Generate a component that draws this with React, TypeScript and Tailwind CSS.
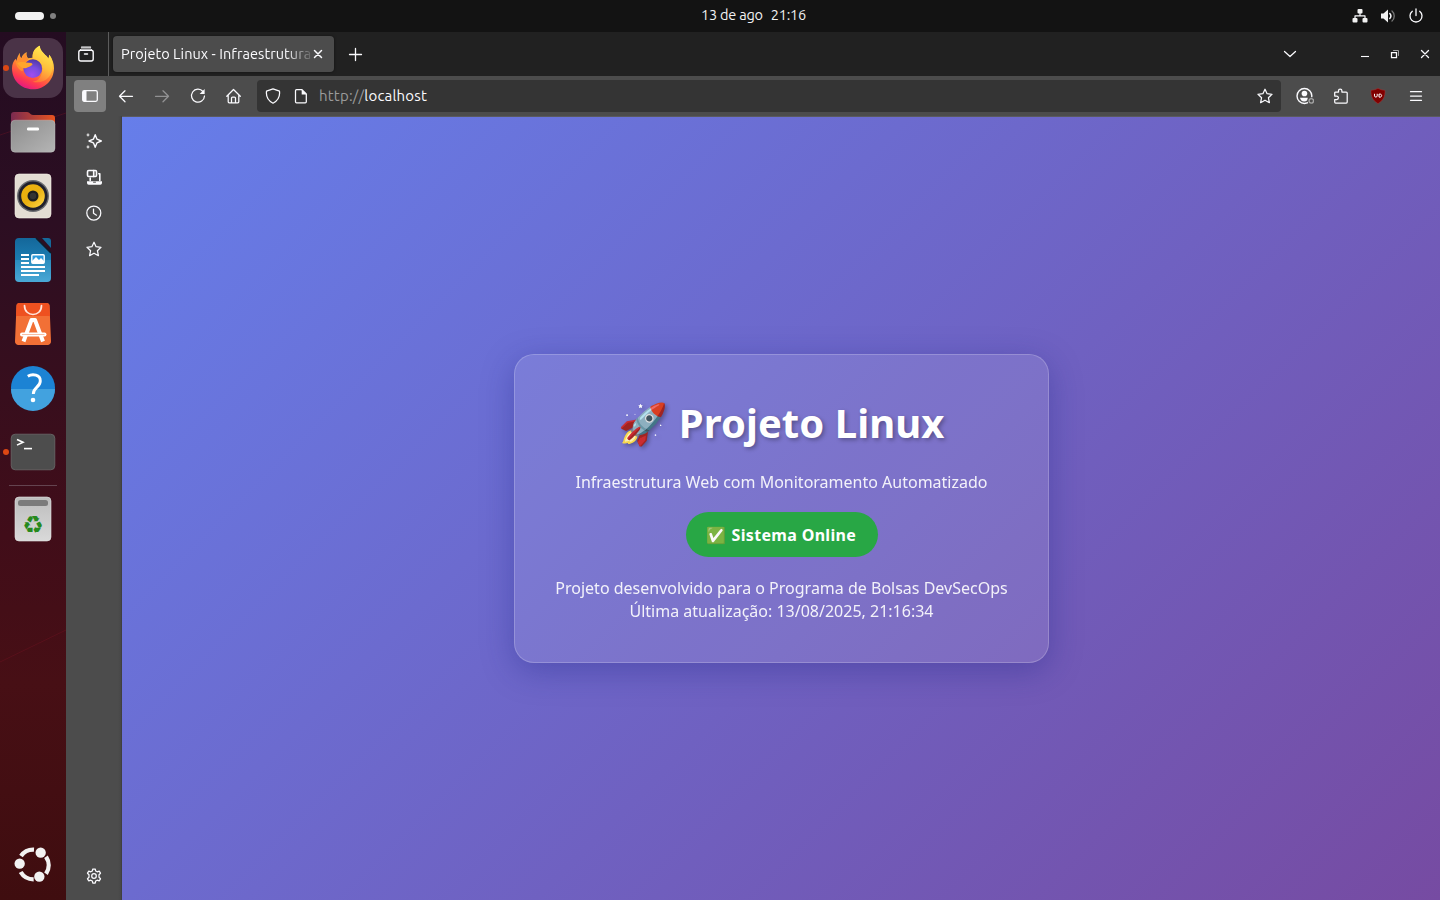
import React from "react";

type Kids = { children: React.ReactNode };

function Glyph({ children, size = 16 }: Kids & { size?: number }) {
  return (
    <svg width={size} height={size} viewBox="0 0 16 16" fill="none" stroke="#fbfbfe" strokeWidth="1.25" strokeLinecap="round" strokeLinejoin="round" className="block shrink-0">
      {children}
    </svg>
  );
}

const STAR = "M8 1.2 10.1 5.7 15 6.3 11.4 9.7 12.4 14.7 8 12.2 3.6 14.7 4.6 9.7 1 6.3 5.9 5.7Z";

function Star() {
  return <Glyph><path d={STAR} /></Glyph>;
}

function ToolButton({ children, active }: Kids & { active?: boolean }) {
  return (
    <div className={active ? "flex size-8 shrink-0 items-center justify-center rounded bg-[#808080]" : "flex size-8 shrink-0 items-center justify-center rounded"}>
      {children}
    </div>
  );
}

function FirefoxIcon() {
  return (
    <svg width="44" height="46" viewBox="33 134 132 138">
      <defs>
        <linearGradient id="ffBody" x1="0.75" y1="0" x2="0.3" y2="1">
          <stop offset="0" stopColor="#fff14a" />
          <stop offset="0.3" stopColor="#ffc53a" />
          <stop offset="0.58" stopColor="#ff7a33" />
          <stop offset="0.8" stopColor="#ff3a50" />
          <stop offset="1" stopColor="#e01587" />
        </linearGradient>
        <radialGradient id="ffGlobe" cx="0.45" cy="0.85" r="0.85">
          <stop offset="0" stopColor="#a04df0" />
          <stop offset="0.5" stopColor="#7a4ce0" />
          <stop offset="1" stopColor="#5039a4" />
        </radialGradient>
        <linearGradient id="ffTail" x1="0.6" y1="0" x2="0.3" y2="1">
          <stop offset="0" stopColor="#fff052" />
          <stop offset="0.55" stopColor="#ffbf3c" />
          <stop offset="1" stopColor="#ff7338" />
        </linearGradient>
      </defs>
      <path fill="url(#ffBody)" d="M60 157C58 165 60 170 64 174C68 163 74 158 80 156C78 162 80 168 84 174L98 172C96 156 104 142 120 136C118 148 128 158 140 167L146 175L148 163C158 176 162 190 162 203C162 239 134 267 99 267C63 267 36 240 36 204C36 192 40 182 47 175L49 182C51 172 55 163 60 157Z" />
      <path fill="url(#ffTail)" d="M98 174C97 157 104 143 120 136C118 149 133 158 145 175L148 163C162 185 161 212 146 231C134 244 115 249 98 244C116 243 128 226 127 204C126 190 116 180 98 174Z" />
      <circle cx="98.500" cy="205" r="28" fill="url(#ffGlobe)" />
      <path fill="#ff8f30" d="M47 176L50 184C54 173 60 159 60 157C59 166 61 171 65 175C69 165 74 159 80 156C77 163 79 170 84 175L84 180C78 184 71 193 69 206C70 216 62 212 55 204C50 199 47 190 47 176Z" />
      <path fill="#ffa52c" d="M52 188C62 182 77 186 94 188L98 192C95 198 85 200 79 203C72 205 65 203 60 198C56 194 53 191 52 188Z" />
    </svg>
  );
}

function FilesIcon() {
  return (
    <svg width="46" height="42" viewBox="0 0 46 42" className="relative top-px">
      <defs>
        <linearGradient id="flBack" x1="0" x2="1"><stop stopColor="#7a2a50" /><stop offset="1" stopColor="#e95420" /></linearGradient>
        <linearGradient id="flFront" x1="0" y1="0" x2="1" y2="1"><stop stopColor="#8c8c8c" /><stop offset="1" stopColor="#b5b5b5" /></linearGradient>
      </defs>
      <path d="M1 12V3a3 3 0 0 1 3-3h13c3 0 3 3 6 3h19a3 3 0 0 1 3 3v8z" fill="url(#flBack)" />
      <rect x="1" y="8.2" width="44" height="32" rx="4" fill="url(#flFront)" stroke="#c4c4c4" strokeOpacity="0.6" strokeWidth="0.7" />
      <rect x="17" y="15.500" width="12" height="3" rx="1.2" fill="#fff" />
    </svg>
  );
}

function MusicIcon() {
  return (
    <svg width="38" height="46" viewBox="0 0 38 46">
      <defs><linearGradient id="spk" x1="0" y1="0" x2="1" y2="1"><stop stopColor="#efb20c" /><stop offset="0.5" stopColor="#e9b010" /><stop offset="1" stopColor="#ffd84a" /></linearGradient></defs>
      <rect x="1" y="1" width="36" height="44" rx="4" fill="#e3ddd3" stroke="#f6f2ea" strokeWidth="0.6" />
      <circle cx="19" cy="23" r="16" fill="#686a6e" />
      <circle cx="19" cy="23" r="14.6" fill="#20202b" />
      <circle cx="19" cy="23" r="11.8" fill="url(#spk)" />
      <circle cx="19" cy="23" r="5.5" fill="#1e1e1e" />
      <circle cx="19" cy="23" r="3.2" fill="#333" />
    </svg>
  );
}

function WriterIcon() {
  return (
    <svg width="38" height="46" viewBox="0 0 38 46">
      <defs><linearGradient id="wr" x1="0" y1="0" x2="0" y2="1"><stop stopColor="#14679a" /><stop offset="0.5" stopColor="#1c7db2" /><stop offset="0.51" stopColor="#2b8dbe" /><stop offset="1" stopColor="#4aa8d6" /></linearGradient></defs>
      <path d="M5 1H22L37 16V41a4 4 0 0 1-4 4H5a4 4 0 0 1-4-4V5a4 4 0 0 1 4-4Z" fill="url(#wr)" />
      <path d="M28 1h6a3 3 0 0 1 3 3v7Z" fill="#15699a" />
      <path d="m22 1 15 15" stroke="#101c2b" strokeWidth="1.6" />
      <path d="M7 18h8M7 22h8M7 26h8M7 30h24M7 34h24M7 38h18" stroke="#fff" strokeWidth="2" />
      <rect x="17.8" y="17.8" width="12.4" height="8.4" rx="1" fill="#2c9bdc" stroke="#fff" strokeWidth="1.4" />
      <path d="M18 26v-2l4-4 3 3 2-2 3 3v2Z" fill="#fff" />
    </svg>
  );
}

function StoreIcon() {
  return (
    <svg width="38" height="44" viewBox="0 0 38 44">
      <path d="M5.500 1H32.500a3 3 0 0 1 3 2.8L37 39a3.500 3.500 0 0 1-3.500 4H4.500A3.500 3.500 0 0 1 1 39L2.500 3.800A3 3 0 0 1 5.500 1Z" fill="#f27036" />
      <path d="M5.500 1H32.500a3 3 0 0 1 3 2.800L36 14H2L2.500 3.800A3 3 0 0 1 5.500 1Z" fill="#ee5120" />
      <path d="M10.500 3.500c0 12 17 12 17 0" fill="none" stroke="#ffe6dc" strokeWidth="1.700" strokeLinecap="round" />
      <g fill="none" stroke="#fff" strokeLinecap="butt">
        <path d="M9.500 39.500 17.500 18h3.500L29 39.500" strokeWidth="4" strokeLinejoin="round" />
        <path d="M8 32.500H30.500" strokeWidth="4" strokeLinecap="round" />
        <path d="M8 32.500H30.500" strokeWidth="1" stroke="#f5bda3" />
      </g>
    </svg>
  );
}

function HelpIcon() {
  return (
    <svg width="46" height="46" viewBox="0 0 46 46">
      <circle cx="23" cy="23" r="22" fill="#1c83d4" />
      <path d="M1 24a22 22 0 0 0 44 0Z" fill="#42a2df" />
      <path d="M17.800 11.300c5-3 12.500-1.400 12.500 4.600 0 6.200-7 6.300-7 13" fill="none" stroke="#fff" strokeWidth="2.900" />
      <circle cx="23" cy="35" r="2.300" fill="#fff" />
    </svg>
  );
}

function TerminalIcon() {
  return (
    <svg width="46" height="38" viewBox="0 0 46 38">
      <rect x="1.200" y="1.200" width="43.600" height="35.600" rx="4" fill="#4d4d4d" stroke="#6b6b6b" strokeWidth="0.8" />
      <path d="m7 6.500 6 2.800-6 2.800" fill="none" stroke="#fff" strokeWidth="1.600" />
      <path d="M14 15.600h8" stroke="#fff" strokeWidth="1.600" />
    </svg>
  );
}

function TrashIcon() {
  return (
    <svg width="38" height="46" viewBox="0 0 38 46">
      <defs><linearGradient id="tr" x1="0" y1="0" x2="0" y2="1"><stop stopColor="#bdbdbd" /><stop offset="1" stopColor="#d9d9d9" /></linearGradient></defs>
      <rect x="1" y="1" width="36" height="44" rx="4" fill="url(#tr)" stroke="#e4e4e4" strokeWidth="0.600" />
      <rect x="4" y="4" width="30" height="6" rx="2.500" fill="#7b7b7b" />
      <text x="19" y="37" textAnchor="middle" fontSize="24" fill="#26891c" fontFamily="DejaVu Sans">♻&#xFE0E;</text>
    </svg>
  );
}

function UbuntuLogo() {
  return (
    <svg width="38" height="38" viewBox="42 138 114 114">
      <g fill="none" stroke="#f2f2f2" strokeWidth="13">
        <path d="M63 168A45 45 0 0 1 102 149" />
        <path d="M138 170A45 45 0 0 1 138 221" />
        <path d="M62 216A45 45 0 0 0 101 238" />
      </g>
      <g fill="#f2f2f2"><circle cx="59" cy="191" r="15.500" /><circle cx="122" cy="158" r="15.500" /><circle cx="118" cy="230" r="15.500" /></g>
    </svg>
  );
}

function DockItem({ children, running, active }: Kids & { running?: boolean; active?: boolean }) {
  return (
    <div className="relative flex h-16 w-full shrink-0 items-center justify-center">
      {running && <span className="absolute top-[29px] left-[3px] size-[6px] rounded-full bg-[#dd4814]" />}
      <div className={active ? "flex size-[60px] items-center justify-center rounded-[14px] bg-[#4a3347]" : "flex size-[60px] items-center justify-center"}>{children}</div>
    </div>
  );
}

function Dock() {
  return (
    <div className="relative flex w-[66px] shrink-0 flex-col items-center bg-[linear-gradient(180deg,#240c21_0%,#2c0e22_22%,#380e1d_42%,#410d19_58%,#470f15_75%,#3f0d0f_100%)] pt-1">
      <svg className="absolute inset-0" width="66" height="868" viewBox="0 0 66 868" fill="none" stroke="#7a1424" strokeOpacity="0.35">
        <path d="M0 103 66 81M0 630 66 598" />
      </svg>
      <DockItem running active><FirefoxIcon /></DockItem>
      <DockItem><FilesIcon /></DockItem>
      <DockItem><MusicIcon /></DockItem>
      <DockItem><WriterIcon /></DockItem>
      <DockItem><StoreIcon /></DockItem>
      <DockItem><HelpIcon /></DockItem>
      <DockItem running><TerminalIcon /></DockItem>
      <div className="mt-px mb-px h-px w-12 shrink-0 bg-[#644450]" />
      <DockItem><TrashIcon /></DockItem>
      <div className="mt-auto flex h-[54px] w-full justify-center"><UbuntuLogo /></div>
    </div>
  );
}

function TopBar() {
  return (
    <div className="flex h-8 shrink-0 items-center bg-[#131313] text-[#f2f2f2]">
      <div className="flex w-[640px] items-center gap-[6px] pl-[15px]">
        <span className="h-2 w-[29px] rounded-full bg-[#f2f2f2]" />
        <span className="size-[6px] rounded-full bg-[#808080]" />
      </div>
      <div className="flex w-[227px] justify-center gap-2 pb-[2px] text-[14.500px] leading-5 tracking-[-0.220px] whitespace-nowrap">
        <span>13 de ago</span><span>21:16</span>
      </div>
      <div className="ml-auto flex items-center gap-3 pr-4">
        <Glyph><g fill="#f2f2f2" stroke="none"><rect x="5.500" y="1" width="5" height="4.500" rx="1" /><rect x="0.500" y="10" width="5" height="4.500" rx="1" /><rect x="10.500" y="10" width="5" height="4.500" rx="1" /></g><path d="M8 5v3M3 10.500V7.900h10v2.600" strokeWidth="1.200" /></Glyph>
        <Glyph><path d="M1 5.500h2.500L8 1.500v13l-4.500-4H1Z" fill="#f2f2f2" stroke="none" /><path d="M9.800 5.500c1.500 1.500 1.500 3.500 0 5" strokeWidth="1.500" /><path d="M12 3c3 2.500 3 7.500 0 10" stroke="#777" strokeWidth="1.300" /></Glyph>
        <Glyph><path d="M8 1v6.500M4.300 3.300a6 6 0 1 0 7.400 0" strokeWidth="1.300" /></Glyph>
      </div>
    </div>
  );
}

function TabStrip() {
  return (
    <div className="flex h-11 shrink-0 items-center bg-[#212121]">
      <div className="flex h-full w-[43px] items-center justify-center border-r border-[#5c5c5c] pr-[2px]">
        <Glyph><path d="M3.500 1.200h9" /><rect x="0.800" y="4.200" width="14.400" height="10.800" rx="2" strokeWidth="1.400" /><path d="M1.500 4.500 3 3h10l1.500 1.500" strokeWidth="0.800" /><path d="M6.500 8h3" strokeWidth="1.500" /></Glyph>
      </div>
      <div className="ml-1 flex h-9 w-[221px] items-center rounded bg-[#4c4c4c] pl-2 shadow-[0_0_3px_rgba(0,0,0,0.5)]">
        <span className="w-[190px] text-[14.500px] tracking-[0.060px] whitespace-nowrap text-[#fbfbfe] [mask-image:linear-gradient(to_right,#000_164px,transparent_194px)]">Projeto Linux - Infraestrutura</span>
        <svg width="14" height="14" viewBox="0 0 14 14" fill="none" stroke="#fbfbfe" strokeWidth="1.500" strokeLinecap="round"><path d="m3.500 3.500 7 7m0-7-7 7" /></svg>
      </div>
      <div className="ml-[14px] flex"><Glyph><path d="M7.500 2.500v12M1.500 8.500h12" strokeWidth="1.300" /></Glyph></div>
      <div className="ml-auto mr-[52px]"><Glyph><path d="m2.500 5.500 5.500 5 5.500-5" /></Glyph></div>
      <div className="flex [&>div]:flex [&>div]:w-[30px] [&>div]:justify-center">
        <div><Glyph><path d="M4 10.500h8" strokeLinecap="butt" strokeWidth="1.100" /></Glyph></div>
        <div><Glyph><path d="M4.500 6.500h5v5h-5Z" strokeLinejoin="miter" /><path d="M6.500 4.500h5v5" stroke="#a0a0a0" strokeWidth="1" strokeLinejoin="miter" /></Glyph></div>
        <div><Glyph><path d="m4.500 4.500 7 7m0-7-7 7" strokeWidth="1.300" /></Glyph></div>
      </div>
    </div>
  );
}

function Toolbar() {
  return (
    <div className="flex h-10 shrink-0 items-center bg-[#4c4c4c] px-2">
      <div className="flex gap-1">
        <ToolButton active><Glyph><rect x="0.700" y="2.700" width="14.600" height="10.600" rx="1.500" strokeWidth="1.300" /><path d="M1 3h3.500v10H1Z" fill="#fbfbfe" stroke="none" /></Glyph></ToolButton>
        <ToolButton><Glyph><path d="M14.500 8.300H1.500M7 2.800 1.500 8.300 7 13.800" /></Glyph></ToolButton>
        <ToolButton><span className="opacity-40"><Glyph><path d="M1.500 8.300h13M9 2.800 14.500 8.300 9 13.800" /></Glyph></span></ToolButton>
        <ToolButton><Glyph><path d="M13 3.500A6.500 6.500 0 1 0 14.500 8" /><path d="M14.600 1v5h-5Z" fill="#fbfbfe" stroke="none" /></Glyph></ToolButton>
        <ToolButton><Glyph><path d="M.8 8.300 7.500 1.500 14.300 8.300M2.200 7.300v6.500a1 1 0 0 0 1 1h8.600a1 1 0 0 0 1-1V7.300M5.500 14.500V10a1 1 0 0 1 1-1h2a1 1 0 0 1 1 1v4.500" /></Glyph></ToolButton>
      </div>
      <div className="ml-[7px] flex h-8 w-[1024px] items-center rounded bg-[#343434] px-2">
        <Glyph><path d="M8 0.900 14.500 3.200c.6 5-1.600 9.500-6.500 12-4.900-2.500-7.100-7-6.500-12Z" /></Glyph>
        <span className="ml-3"><Glyph><path d="M3.500 1.700h5.500l4.300 4.300v7.800a1 1 0 0 1-1 1h-8.800a1 1 0 0 1-1-1V2.700a1 1 0 0 1 1-1Z" /><path d="M8.700 1.500v5h4.800Z" fill="#fbfbfe" stroke="none" /></Glyph></span>
        <span className="ml-[10px] text-[15px] leading-5 tracking-[0.200px] text-[#fbfbfe]"><span className="text-[#9b9b9b]">http://</span>localhost</span>
        <span className="ml-auto"><Star /></span>
      </div>
      <div className="ml-2 flex gap-1">
        <ToolButton><Glyph size={18}><circle cx="7.500" cy="8" r="6.600" /><circle cx="7.500" cy="5.800" r="2.500" fill="#fbfbfe" stroke="none" /><path d="M3.500 9.500h7l-.5 2.300c-1.500 1.400-4 1.400-5.500 0Z" fill="#fbfbfe" stroke="none" /><circle cx="13.600" cy="12.300" r="2.800" fill="#4c4c4c" stroke="#4c4c4c" strokeWidth="1" /><circle cx="13.600" cy="12.300" r="2" stroke="#a5a5a5" strokeWidth="1.200" /></Glyph></ToolButton>
        <ToolButton><Glyph><path d="M1.700 6V5a1 1 0 0 1 1-1H5.500V2.700a1.700 1.700 0 0 1 3.400 0V4h4.300a1 1 0 0 1 1 1v9a1 1 0 0 1-1 1H2.700a1 1 0 0 1-1-1v-2.500h2a1.700 1.700 0 0 0 0-3.400h-2Z" /></Glyph></ToolButton>
        <div className="ml-px"><ToolButton>
          <svg width="16" height="16" viewBox="0 0 16 16"><path d="M8 .3c2 1.200 4.500 1.900 7 2 .2 6-1.500 10-7 13.400C2.500 12.300.800 8.300 1 2.300c2.500-.1 5-.8 7-2Z" fill="#800000" stroke="#a53a3a" strokeWidth="0.500" /><path d="M4.500 5.800v2.100c0 1.600 2.700 1.600 2.700 0V5.800M9 6.100h1c2.200 0 2.200 3 0 3H9Z" fill="none" stroke="#fff" strokeWidth="1" /></svg>
        </ToolButton></div>
        <div className="ml-[2px]"><ToolButton><Glyph><path d="M2.500 3.700h11M2.500 8h11M2.500 12.300h11" /></Glyph></ToolButton></div>
      </div>
    </div>
  );
}

function SideBar() {
  return (
    <div className="flex w-14 shrink-0 flex-col items-center gap-5 border-r border-[#404040] bg-[linear-gradient(90deg,#4c4c4c_52px,#454545_56px)] pt-[17px] pb-4">
      <Glyph><path d="M9.200 1.700 11 6.200 15.300 8 11 9.800 9.200 14.300 7.400 9.800 3 8 7.400 6.200Z" strokeWidth="1.400" /><circle cx="2" cy="2" r="1.400" fill="#ccc" stroke="none" /><circle cx="2" cy="14" r="1.400" fill="#ccc" stroke="none" /></Glyph>
      <Glyph><rect x="1.500" y="1.500" width="9" height="6" rx="1.200" strokeWidth="1.600" /><path d="M7.700 1.500v6M12.800 4.700h1v6.800M4.200 9v2.500" strokeWidth="1.600" /><path d="M1 12.300h15v1.700a1.700 1.700 0 0 1-1.700 1.700H2.700A1.700 1.700 0 0 1 1 14Z" fill="#fbfbfe" stroke="none" /><path d="M7.500 13.200h2" stroke="#4c4c4c" strokeWidth="1" /></Glyph>
      <Glyph><circle cx="7.800" cy="8" r="7" /><path d="M7.500 4v4.200l3 2" /></Glyph>
      <Star />
      <div className="mt-auto">
        <Glyph><path d="M6.800 1h2.400l.5 2 1.500.8 2-.7 1.300 2.100L13 6.700v2.600l1.500 1.500-1.300 2.100-2-.7-1.500.8-.5 2H6.800l-.5-2-1.500-.8-2 .7-1.300-2.100L3 9.300V6.700L1.500 5.200l1.300-2.100 2 .7L6.300 3Z" /><circle cx="8" cy="8" r="2.300" /></Glyph>
      </div>
    </div>
  );
}

function Page() {
  return (
    <div className="flex min-w-0 flex-1 items-center justify-center bg-[linear-gradient(135deg,#667eea_0%,#764ba2_100%)]">
      <div className="flex h-[309px] w-[535px] flex-col items-center rounded-[20px] border border-white/20 bg-white/10 pt-10 pr-[39px] pl-10 text-center font-['Noto_Sans','Noto_Color_Emoji',sans-serif] text-white shadow-[0_8px_32px_rgba(31,38,135,0.37)]">
        <h1 className="text-[40px] leading-[55px] font-bold tracking-[0.050px] whitespace-nowrap [text-shadow:2px_2px_4px_rgba(0,0,0,0.3)]">🚀 Projeto Linux</h1>
        <p className="mt-[21px] text-[16px] leading-[23px] whitespace-nowrap opacity-90">Infraestrutura Web com Monitoramento Automatizado</p>
        <div className="mt-[18px] flex h-[45px] w-[192px] items-center justify-center rounded-full bg-[#28a745] text-[16px] font-bold tracking-[0.330px] whitespace-nowrap">✅ Sistema Online</div>
        <p className="mt-[20px] text-[16px] leading-[23px] whitespace-nowrap opacity-90">Projeto desenvolvido para o Programa de Bolsas DevSecOps<br />Última atualização: 13/08/2025, 21:16:34</p>
      </div>
    </div>
  );
}

export default function App() {
  return (
    <div className="flex h-[900px] w-[1440px] flex-col overflow-hidden bg-[#131313] font-['Ubuntu','Noto_Sans',sans-serif]">
      <TopBar />
      <div className="flex min-h-0 flex-1">
        <Dock />
        <div className="flex min-w-0 flex-1 flex-col">
          <TabStrip />
          <Toolbar />
          <div className="flex min-h-0 flex-1 bg-[#4c4c4c]">
            <SideBar />
            <div className="flex min-w-0 flex-1 border-t border-[#5a5a5f]"><Page /></div>
          </div>
        </div>
      </div>
    </div>
  );
}
